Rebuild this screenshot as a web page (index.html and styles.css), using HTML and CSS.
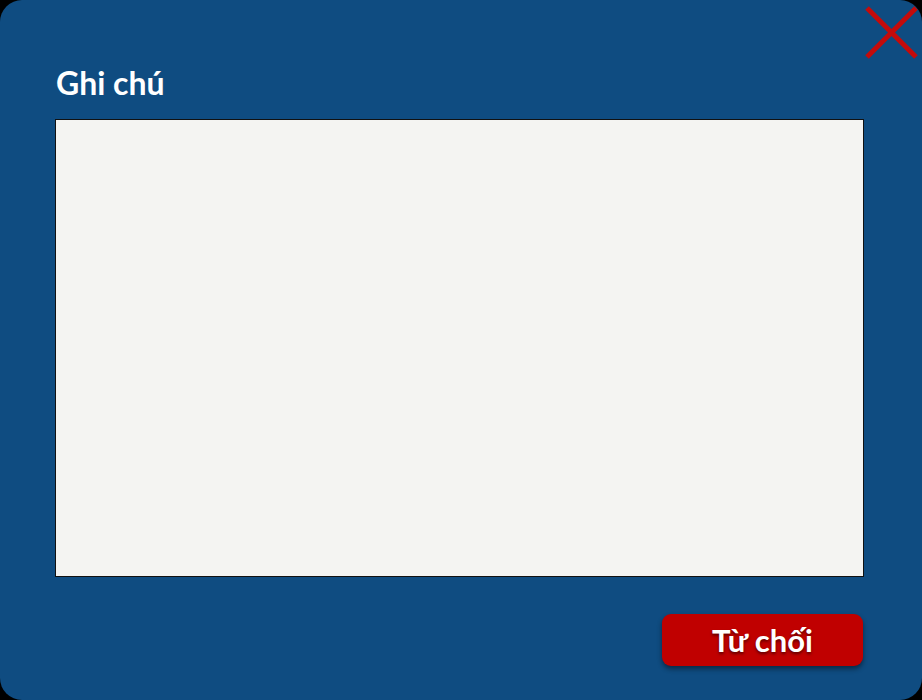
FILE: index.html
```html
<!DOCTYPE html>
<html lang="vi">
<head>
<meta charset="utf-8">
<link rel="stylesheet" href="styles.css">
</head>
<body>
<div class="dialog">
  <button class="close" aria-label="Đóng">
    <svg width="56" height="56" viewBox="0 0 56 56"><path d="M3 3 L52 52 M52 3 L3 52" stroke="#c40b0b" stroke-width="5" stroke-linecap="butt" fill="none"/></svg>
  </button>
  <h1 class="title">Ghi chú</h1>
  <textarea class="note"></textarea>
  <div class="actions">
    <button class="reject">Từ chối</button>
  </div>
</div>
</body>
</html>
```
FILE: styles.css
```css
html, body {
  margin: 0;
  padding: 0;
  background: #000;
}
.dialog {
  position: relative;
  box-sizing: border-box;
  width: 922px;
  height: 700px;
  background: #0f4c81;
  border-radius: 22px;
  padding: 64px 58px 0 55px;
  display: flex;
  flex-direction: column;
  font-family: Lato, "Noto Sans", sans-serif;
}
.close {
  position: absolute;
  top: 5px;
  right: 2px;
  padding: 0;
  border: 0;
  background: none;
  width: 56px;
  height: 56px;
}
.close svg { display: block; }
.title {
  margin: 0 0 0 1px;
  color: #fff;
  font-size: 32px;
  font-weight: 700;
  line-height: 38px;
  height: 55px;
}
.note {
  box-sizing: border-box;
  width: 809px;
  height: 458px;
  margin: 0;
  border: 1px solid #111;
  background: #f4f4f2;
  resize: none;
  display: block;
}
.actions {
  display: flex;
  justify-content: flex-end;
  padding-top: 37px;
  padding-right: 1px;
}
.reject {
  width: 201px;
  height: 52px;
  border: 0;
  border-radius: 9px;
  background: #c00000;
  color: #fff;
  font-family: Lato, "Noto Sans", sans-serif;
  font-size: 31px;
  font-weight: 700;
  box-shadow: 0 3px 5px rgba(0,0,0,0.45);
  text-shadow: 0 2px 3px rgba(0,0,0,0.5);
  padding: 0;
}
```
